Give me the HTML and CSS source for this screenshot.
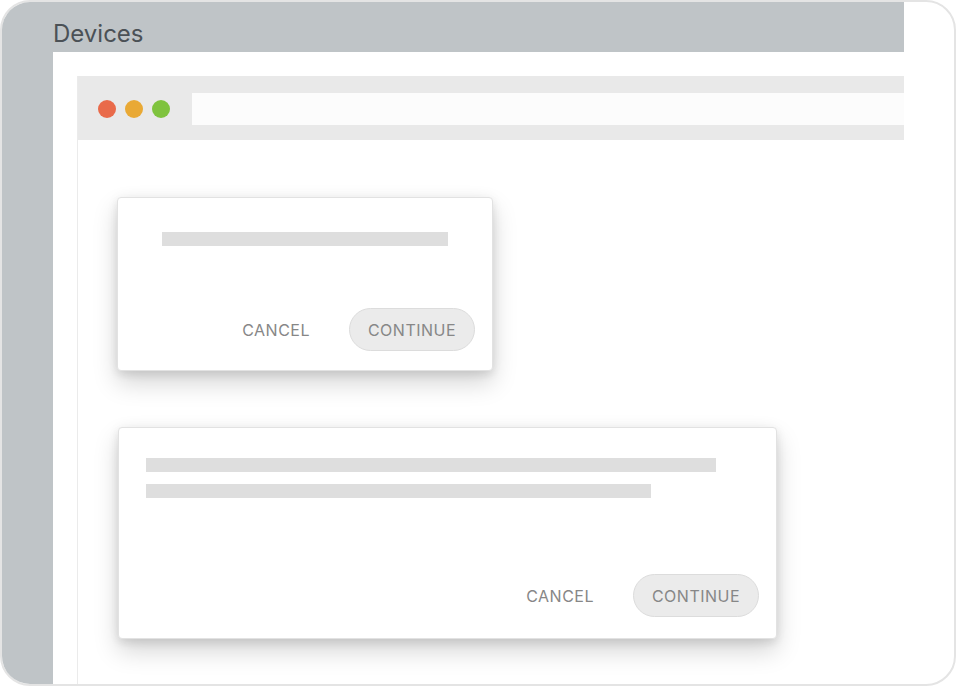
FILE: index.html
```html
<!DOCTYPE html>
<html lang="en">
<head>
<meta charset="utf-8">
<title>Devices</title>
<link rel="stylesheet" href="styles.css">
</head>
<body>
<div class="frame">
  <div class="panel">
    <div class="panel-header"><h1 class="title">Devices</h1></div>
    <div class="panel-body">
      <div class="content">
        <div class="browser">
          <div class="browser-bar">
            <div class="dots">
              <span class="dot dot-red"></span>
              <span class="dot dot-yellow"></span>
              <span class="dot dot-green"></span>
            </div>
            <div class="address"></div>
          </div>
          <div class="browser-body">
            <div class="dialog dialog-small">
              <div class="lines">
                <div class="line line-a"></div>
              </div>
              <div class="actions">
                <button class="btn btn-text">CANCEL</button>
                <button class="btn btn-pill">CONTINUE</button>
              </div>
            </div>
            <div class="dialog dialog-large">
              <div class="lines">
                <div class="line line-b"></div>
                <div class="line line-c"></div>
              </div>
              <div class="actions">
                <button class="btn btn-text">CANCEL</button>
                <button class="btn btn-pill">CONTINUE</button>
              </div>
            </div>
          </div>
        </div>
      </div>
    </div>
  </div>
</div>
</body>
</html>
```
FILE: styles.css
```css
* { box-sizing: border-box; }
html, body { margin: 0; padding: 0; background: #ffffff; }
body { font-family: Inter, "Noto Sans", sans-serif; }

.frame {
  width: 956px;
  height: 686px;
  border: 2px solid #e4e4e4;
  border-radius: 30px;
  overflow: hidden;
  background: #ffffff;
  display: flex;
}

.panel {
  width: 902px;
  height: 100%;
  background: #bfc4c7;
  display: flex;
  flex-direction: column;
}

.panel-header {
  height: 50px;
  padding: 0 0 4px 51px;
  display: flex;
  align-items: flex-end;
}

.title {
  margin: 0;
  font-size: 24px;
  line-height: 29px;
  font-weight: 400;
  color: #4b5156;
}

.panel-body {
  flex: 1;
  padding-left: 51px;
  display: flex;
  min-height: 0;
}

.content {
  flex: 1;
  background: #ffffff;
  padding: 24px 0 0 24px;
  display: flex;
  overflow: hidden;
}

.browser {
  flex: 1;
  border-left: 1px solid #ebebeb;
  display: flex;
  flex-direction: column;
}

.browser-bar {
  height: 64px;
  background: #e9e9e9;
  display: flex;
  align-items: center;
  padding-left: 20px;
  gap: 22px;
  flex-shrink: 0;
}

.dots { display: flex; gap: 9px; margin-top: 2px; }
.dot { width: 18px; height: 18px; border-radius: 50%; display: block; }
.dot-red { background: #e96a4a; }
.dot-yellow { background: #e9a935; }
.dot-green { background: #7fc33e; }

.address {
  flex: 1;
  height: 32px;
  margin-top: 2px;
  background: #fcfcfc;
}

.browser-body {
  flex: 1;
  padding: 57px 0 0 39px;
  display: flex;
  flex-direction: column;
  align-items: flex-start;
  gap: 56px;
}

.dialog {
  background: #ffffff;
  border: 1px solid #e2e2e2;
  border-radius: 4px;
  box-shadow: 0 12px 24px rgba(0, 0, 0, 0.17), 0 4px 8px rgba(0, 0, 0, 0.08), 0 0 14px rgba(0, 0, 0, 0.04);
  display: flex;
  flex-direction: column;
  justify-content: space-between;
}

.dialog-small {
  width: 376px;
  height: 174px;
  padding: 34px 17px 19px 44px;
}

.dialog-large {
  width: 659px;
  height: 212px;
  margin-left: 1px;
  padding: 30px 17px 21px 27px;
}

.lines { display: flex; flex-direction: column; gap: 12px; }
.line { height: 14px; background: #dedede; }
.line-a { width: 286px; }
.line-b { width: 570px; }
.line-c { width: 505px; }

.actions {
  display: flex;
  justify-content: flex-end;
  align-items: center;
  gap: 20px;
}

.btn {
  font-family: Inter, "Noto Sans", sans-serif;
  font-size: 16px;
  letter-spacing: 0.5px;
  color: #878787;
  background: none;
  border: 0;
  margin: 0;
  cursor: pointer;
}

.btn-text {
  padding: 0 19px;
  height: 43px;
}

.btn-pill {
  height: 43px;
  width: 126px;
  padding: 0;
  background: #ebebeb;
  border: 1px solid #dcdcdc;
  border-radius: 22px;
}
```
